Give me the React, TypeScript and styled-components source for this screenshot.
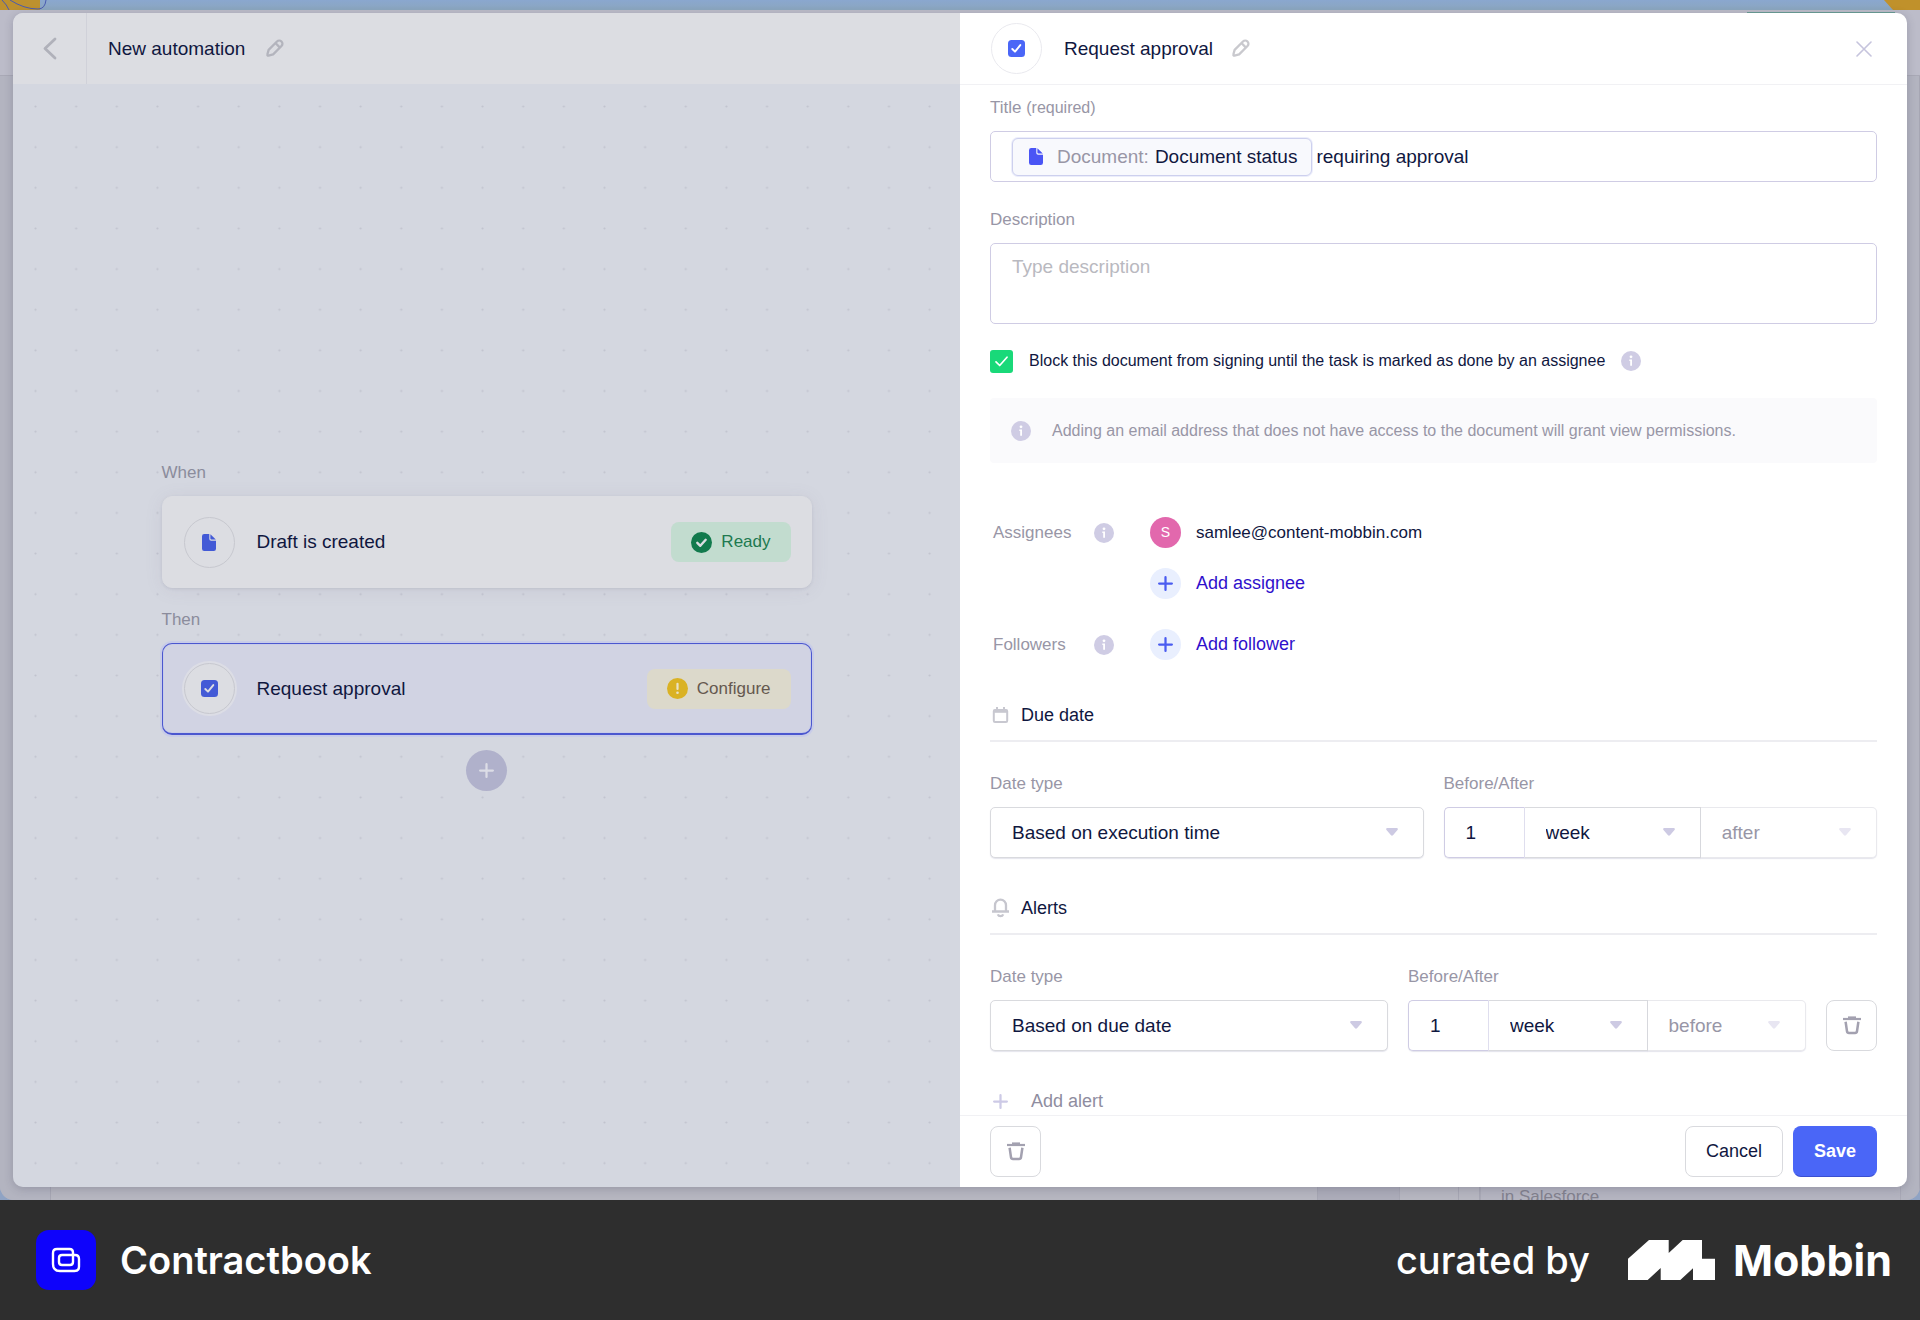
import React, { useId, useState } from "react";
import styled, { createGlobalStyle, css } from "styled-components";

const color = {
  ink: "#10173f",
  label: "#9896a6",
  lavender: "#cfcce4",
  line: "#d9dade",
  primary: "#4a66f7",
  link: "#2f10cc",
};

const GlobalStyle = createGlobalStyle`
  *, *::before, *::after { box-sizing: border-box; }
  body { margin: 0; background: #2e2e2e; }
  body, button, input, select, textarea {
    font-family: "Liberation Sans", Arial, sans-serif;
    color: ${color.ink};
  }
  h1, h2, h3, p { margin: 0; font-weight: 400; }
`;

/* ---------- page frame ---------- */

const Page = styled.div`
  display: flex;
  flex-direction: column;
  height: 100vh;
`;

const Stage = styled.main`
  flex: 1;
  min-height: 0;
  display: grid;
  grid-template: minmax(0, 1fr) / minmax(0, 1fr);
  overflow: hidden;

  > * {
    grid-area: 1 / 1;
  }
`;

const Backdrop = styled.div`
  display: flex;
  flex-direction: column;
  min-height: 0;
  background: #8fa3c4;
  overflow: hidden;
`;

const Wallpaper = styled.div`
  display: flex;
  justify-content: space-between;
  height: 10px;
  background: linear-gradient(#8aa7cf, #8ba6be);
`;

const AppWindow = styled.div`
  flex: 1;
  min-height: 0;
  display: flex;
  flex-direction: column;
  border-radius: 0 0 14px 14px;
  background: #b4b4c0;
  overflow: hidden;
`;

const AppBar = styled.div`
  display: flex;
  justify-content: flex-end;
  height: 66px;
  padding: 2px 25px 0 0;
  background: #bcbcc9;
  border-bottom: 1px solid #a9a9b6;
`;

const AppBarAccent = styled.span`
  width: 148px;
  height: 2px;
  background: #6a9d95;
`;

const AppColumns = styled.div`
  flex: 1;
  min-height: 0;
  display: flex;
  align-items: stretch;
`;

const AppColumn = styled.div<{ $width?: number; $shade?: string }>`
  ${(p) => (p.$width ? `flex: none; width: ${p.$width}px;` : "flex: 1;")}
  background: ${(p) => p.$shade ?? "#b6b6c0"};
  border-right: 1px solid #a6a6b3;
`;

const TemplateCard = styled.div`
  flex: none;
  width: 421px;
  height: calc(100% + 8px);
  display: flex;
  align-items: flex-end;
  padding: 0 20px;
  border: 1px solid #a9a9b6;
  font-size: 17px;
  line-height: 20px;
  color: #83828f;
`;

/* ---------- modal ---------- */

const Modal = styled.section`
  z-index: 1;
  min-height: 0;
  margin: 13px;
  display: grid;
  grid-template: minmax(0, 1fr) / repeat(2, minmax(0, 1fr));
  border-radius: 10px;
  overflow: hidden;
  box-shadow: 0 2px 10px rgba(40, 40, 70, 0.22);
`;

const Overview = styled.div`
  display: flex;
  flex-direction: column;
  background: #d4d7e0;
`;

const OverviewHeader = styled.header`
  flex: none;
  height: 71px;
  display: flex;
  align-items: center;
  background: #dcdde2;
`;

const IconButton = styled.button`
  flex: none;
  display: inline-flex;
  align-items: center;
  justify-content: center;
  padding: 0;
  border: 0;
  background: none;
  cursor: pointer;
`;

const BackButton = styled(IconButton)`
  align-self: stretch;
  width: 74px;
  border-right: 1px solid #d0d1d9;
`;

const Heading = styled.h2`
  font-size: 19px;
  line-height: 24px;
  color: ${color.ink};
`;

const OverviewTitle = styled.div`
  display: flex;
  align-items: center;
  gap: 19px;
  padding-left: 21px;
`;

const Canvas = styled.div`
  flex: 1;
  min-height: 0;
  display: grid;
  grid-template: minmax(0, 1fr) / minmax(0, 1fr);

  > * {
    grid-area: 1 / 1;
  }
`;

const DotGrid = styled.svg`
  width: 100%;
  height: 100%;
`;

const Flow = styled.div`
  z-index: 1;
  display: flex;
  flex-direction: column;
  justify-content: center;
  align-items: center;
  padding: 0 40px 19px;
`;

const Steps = styled.div`
  width: 100%;
  max-width: 650px;
  display: flex;
  flex-direction: column;
`;

const StepLabel = styled.p`
  margin-bottom: 11px;
  font-size: 17px;
  line-height: 24px;
  color: #8b8c9c;
`;

const StepCard = styled.article<{ $active?: boolean }>`
  display: flex;
  align-items: center;
  gap: 22px;
  height: 92px;
  padding: 0 20px 0 21px;
  border-radius: 10px;
  ${(p) =>
    p.$active
      ? css`
          background: #d1d3e3;
          border: 1px solid #4b57cf;
          border-bottom-width: 2px;
          box-shadow: 0 0 0 2px #c8cce8, inset 0 0 0 1px #c8cce8;
        `
      : css`
          background: #dcdde2;
          border: 1px solid #dcdde2;
          margin-bottom: 20px;
          box-shadow: 0 1px 3px rgba(80, 80, 110, 0.12), 0 2px 18px rgba(120, 110, 140, 0.1);
        `}

  ${Heading} {
    flex: 1;
  }
`;

const IconCircle = styled.span<{ $tone?: "muted" | "halo" }>`
  flex: none;
  display: inline-flex;
  align-items: center;
  justify-content: center;
  width: 51px;
  height: 51px;
  border-radius: 50%;
  border: 1px solid ${(p) => (p.$tone ? "#c7c8cf" : "#e9e9ee")};
  background: ${(p) => (p.$tone ? "#dcdde2" : "#ffffff")};
  ${(p) => p.$tone === "halo" && "box-shadow: 0 0 0 2px #dcdde5;"}
`;

const Status = styled.span<{ $kind: "ready" | "configure" }>`
  display: inline-flex;
  align-items: center;
  gap: 9px;
  height: 40px;
  padding: 0 20px;
  border-radius: 8px;
  font-size: 17px;
  background: ${(p) => (p.$kind === "ready" ? "#c2dccf" : "#dcd9cb")};
  color: ${(p) => (p.$kind === "ready" ? "#20794f" : "#65584f")};
`;

const AddStep = styled(IconButton)`
  width: 41px;
  height: 41px;
  margin-top: 15px;
  align-self: center;
  border-radius: 50%;
  background: #b0b1cb;
`;

/* ---------- editor panel ---------- */

const Editor = styled.form`
  display: flex;
  flex-direction: column;
  min-height: 0;
  background: #ffffff;
`;

const EditorHeader = styled.header`
  flex: none;
  display: flex;
  align-items: center;
  gap: 17px;
  height: 72px;
  padding: 0 33px 0 31px;
  border-bottom: 1px solid #f1f1f4;

  ${Heading} {
    margin-left: 5px;
  }
`;

const Close = styled(IconButton)`
  width: 20px;
  height: 20px;
  margin-left: auto;
`;

const EditorBody = styled.div`
  flex: 1;
  min-height: 0;
  overflow-y: auto;
  scrollbar-width: none;
  padding: 11px 30px 0;
`;

const Field = styled.div<{ $after?: number }>`
  flex: 1;
  min-width: 0;
  display: flex;
  flex-direction: column;
  gap: 11px;
  margin-bottom: ${(p) => p.$after ?? 0}px;
`;

const labelText = css`
  font-size: 17px;
  line-height: 24px;
  color: ${color.label};
`;

const Label = styled.label`
  ${labelText}
`;

const Hint = styled.span`
  font-size: 16px;
`;

const TokenBox = styled.div`
  display: flex;
  align-items: center;
  gap: 4px;
  height: 51px;
  padding: 0 21px;
  border: 1px solid ${color.lavender};
  border-radius: 5px;
`;

const Token = styled.span`
  flex: none;
  display: inline-flex;
  align-items: center;
  gap: 6px;
  height: 38px;
  padding: 0 14px 0 16px;
  border: 1px solid #cdd0ee;
  border-radius: 6px;
  background: #f8f9fd;
  box-shadow: 0 0 0 1px #eceefb;
  font-size: 19px;

  svg {
    margin-right: 8px;
  }
`;

const TokenSource = styled.span`
  color: ${color.label};
`;

const BareInput = styled.input`
  flex: 1;
  min-width: 0;
  height: 38px;
  padding: 0;
  border: 0;
  outline: 0;
  background: none;
  font-size: 19px;
`;

const TextArea = styled.textarea`
  display: block;
  width: 100%;
  height: 81px;
  padding: 11px 21px;
  border: 1px solid ${color.lavender};
  border-radius: 5px;
  outline: 0;
  resize: none;
  font-size: 19px;
  line-height: 24px;

  &::placeholder {
    color: #b9b9c0;
  }
`;

const CheckRow = styled.div`
  display: flex;
  align-items: center;
  height: 24px;
  margin-bottom: 25px;
`;

const CheckBox = styled.span`
  display: grid;
  place-items: center;
  width: 23px;
  height: 23px;

  > * {
    grid-area: 1 / 1;
  }

  svg {
    pointer-events: none;
  }
`;

const CheckInput = styled.input`
  appearance: none;
  width: 23px;
  height: 23px;
  margin: 0;
  border-radius: 3px;
  background: #c9c9d6;

  &:checked {
    background: #19d979;
  }
`;

const CheckLabel = styled.label`
  margin: 0 16px;
  font-size: 16px;
  line-height: 24px;
`;

const Notice = styled.p`
  display: flex;
  align-items: center;
  gap: 21px;
  height: 65px;
  padding: 0 21px;
  margin-bottom: 54px;
  border-radius: 4px;
  background: #fafafc;
  font-size: 16px;
  color: ${color.label};
`;

const PeopleGroups = styled.div`
  display: flex;
  flex-direction: column;
  gap: 30px;
  margin-bottom: 43px;
  padding-left: 3px;
`;

const People = styled.div`
  display: grid;
  grid-template-columns: 101px 56px 1fr;
  align-items: start;
`;

const PeopleLabel = styled.span`
  ${labelText}
  line-height: 31px;
`;

const PeopleInfo = styled.span`
  display: flex;
  align-items: center;
  height: 31px;
`;

const PeopleList = styled.div`
  display: flex;
  flex-direction: column;
  align-items: flex-start;
  gap: 20px;
`;

const Person = styled.div`
  display: flex;
  align-items: center;
  gap: 15px;
  font-size: 17px;
`;

const Avatar = styled.span`
  width: 31px;
  height: 31px;
  border-radius: 50%;
  background: #e268ad;
  color: #ffffff;
  font-size: 14px;
  line-height: 31px;
  text-align: center;
`;

const AddPerson = styled.button`
  display: flex;
  align-items: center;
  gap: 15px;
  height: 31px;
  padding: 0;
  border: 0;
  background: none;
  font-size: 18px;
  color: ${color.link};
  cursor: pointer;
`;

const PlusCircle = styled.span`
  display: flex;
  align-items: center;
  justify-content: center;
  width: 31px;
  height: 31px;
  border-radius: 50%;
  background: #e9effe;
`;

const SectionTitle = styled.h3`
  display: flex;
  align-items: center;
  gap: 11px;
  margin-bottom: 30px;
  padding: 0 0 13px 1px;
  border-bottom: 2px solid #ededf1;
  font-size: 18px;
  line-height: 24px;
`;

const FieldRow = styled.div`
  display: flex;
  align-items: flex-end;
  gap: 20px;
  margin-bottom: 38px;
`;

const Joined = styled.div`
  display: flex;

  > * {
    border-radius: 0;
  }
  > :first-child {
    border-radius: 5px 0 0 5px;
  }
  > :last-child select {
    border-radius: 0 5px 5px 0;
  }
  > :not(:last-child) select {
    border-radius: 0;
  }
  > :not(:first-child) select {
    border-left: 0;
  }
`;

const AmountInput = styled.input`
  flex: none;
  width: 81px;
  height: 51px;
  padding: 0 21px;
  border: 1px solid;
  border-color: ${color.lavender} #e2e0f0 ${color.lavender} ${color.lavender};
  box-shadow: 0 1px 1px rgba(190, 190, 210, 0.4);
  outline: 0;
  font-size: 19px;
`;

const SelectBox = styled.div`
  position: relative;
  flex: 1;
  min-width: 0;
`;

const Select = styled.select`
  appearance: none;
  display: block;
  width: 100%;
  height: 51px;
  padding: 0 48px 0 21px;
  border: 1px solid ${color.line};
  border-radius: 5px;
  box-shadow: 0 1px 1px rgba(190, 190, 210, 0.4);
  background: #ffffff;
  outline: 0;
  font-size: 19px;

  &:disabled {
    color: ${color.label};
    border-color: #e9e9ed;
    opacity: 1;
  }
`;

const SelectArrow = styled.svg`
  position: absolute;
  top: 21px;
  right: 26px;
  pointer-events: none;
`;

const AddAlert = styled.button`
  display: flex;
  align-items: center;
  gap: 23px;
  height: 24px;
  padding: 0 0 0 3px;
  border: 0;
  background: none;
  font-size: 18px;
  line-height: 24px;
  color: #8f8d9f;
  cursor: pointer;
`;

const EditorFooter = styled.footer`
  flex: none;
  display: flex;
  gap: 10px;
  padding: 10px 30px;
  border-top: 1px solid #f1f1f4;
`;

const Button = styled.button<{ $kind?: "primary" | "icon" }>`
  flex: none;
  display: inline-flex;
  align-items: center;
  justify-content: center;
  height: 51px;
  padding: 0 20px;
  border: 1px solid ${color.line};
  border-radius: 8px;
  background: #ffffff;
  font-size: 18px;
  cursor: pointer;

  ${(p) => p.$kind === "icon" && "width: 51px; padding: 0;"}
  ${(p) =>
    p.$kind === "primary" &&
    css`
      border-color: ${color.primary} ${color.primary} #3a4fd0;
      background: ${color.primary};
      color: #ffffff;
      font-weight: 700;
    `}
`;

const FooterSpacer = styled.span`
  flex: 1;
`;

/* ---------- credit bar ---------- */

const CreditBar = styled.footer`
  flex: none;
  display: flex;
  align-items: center;
  height: 120px;
  padding: 0 28px 0 36px;
  background: #2e2e2e;
  color: #ffffff;
  font-family: Inter, "Liberation Sans", sans-serif;
  font-size: 38px;
  font-weight: 500;
`;

const Brand = styled.span`
  display: flex;
  align-items: center;
  gap: 24px;
  margin-right: auto;
  font-weight: 600;
`;

const Curator = styled.span`
  display: flex;
  align-items: center;
  gap: 18px;
  margin-left: 38px;
  font-size: 43px;
  font-weight: 700;
`;

/* ---------- icons ---------- */

const Pencil = ({ stroke = "#c9c9ce" }: { stroke?: string }) => (
  <svg width="20" height="20" viewBox="0 0 20 20" fill="none" stroke={stroke} strokeWidth="2.300" strokeLinejoin="round" aria-hidden>
    <g transform="rotate(45 10 10)">
      <path d="M6.8 2.600a3.200 3.200 0 0 1 6.400 0v11.800L10.800 18.600a.9.9 0 0 1-1.600 0L6.800 14.400z" />
      <path d="M6.800 4.800h6.400" />
    </g>
  </svg>
);

const FileIcon = ({ fill }: { fill: string }) => (
  <svg width="14" height="17" viewBox="0 0 14 17" fill={fill} aria-hidden>
    <path d="M2.200 0H7.300V4.900A1.800 1.800 0 0 0 9.100 6.700H14V14.800A2.200 2.200 0 0 1 11.800 17H2.200A2.200 2.200 0 0 1 0 14.800V2.200A2.200 2.200 0 0 1 2.200 0Z" />
    <path d="M8.400 0.200L13.800 5.600H9.500A1.100 1.100 0 0 1 8.400 4.500Z" />
  </svg>
);

const TaskIcon = ({ fill, check }: { fill: string; check: string }) => (
  <svg width="17" height="17" viewBox="0 0 17 17" aria-hidden>
    <rect width="17" height="17" rx="3.500" fill={fill} />
    <path d="M4.300 9l2.700 2.700 5.300-6.600" fill="none" stroke={check} strokeWidth="1.900" strokeLinecap="round" strokeLinejoin="round" />
  </svg>
);

const InfoIcon = () => (
  <svg width="20" height="20" viewBox="0 0 20 20" role="img" aria-label="Info">
    <circle cx="10" cy="10" r="10" fill={color.lavender} />
    <circle cx="10" cy="5.800" r="1.400" fill="#fff" />
    <path d="M8.300 8.600H11v6.200H9.200v-4.800h-.9z" fill="#fff" />
  </svg>
);

const Plus = ({ size, stroke }: { size: number; stroke: string }) => (
  <svg width={size} height={size} viewBox="0 0 16 16" stroke={stroke} strokeWidth="2.400" strokeLinecap="round" aria-hidden>
    <path d="M8 1.200v13.600M1.200 8h13.600" />
  </svg>
);

const Trash = () => (
  <svg width="18" height="19" viewBox="0 0 18 19" fill="none" stroke="#a3a1b0" aria-hidden>
    <path d="M0 3H18" strokeWidth="2.200" />
    <path d="M5 1.200H13" strokeWidth="1.600" />
    <path d="M2.600 5.800L4 15.300A2 2 0 0 0 6 17H12A2 2 0 0 0 14 15.300L15.400 5.800" strokeWidth="2.500" />
  </svg>
);

const CalendarIcon = () => (
  <svg width="19" height="20" viewBox="0 0 19 20" fill="none" stroke="#c8c8d0" aria-hidden>
    <rect x="2.800" y="5" width="13.400" height="12" rx="1.200" strokeWidth="2" />
    <path d="M2.800 6.300H16.200" strokeWidth="3" />
    <path d="M6 2V5M13 2V5" strokeWidth="2" />
  </svg>
);

const BellIcon = () => (
  <svg width="19" height="20" viewBox="0 0 19 20" fill="none" stroke="#c6c6ce" strokeWidth="2.300" aria-hidden>
    <path d="M1 13.500H18M4 13.500V7.200A5.500 5.500 0 0 1 15 7.200V13.500" />
    <path d="M6.800 16.300A2.900 2.900 0 0 0 12.200 16.300" />
  </svg>
);

const ContractbookLogo = () => (
  <svg width="60" height="60" viewBox="0 0 60 60" aria-hidden>
    <rect width="60" height="60" rx="13" fill="#0e03fb" />
    <path
      d="M21 19H33.500Q37 19 37 22.500V32Q37 35 34 35H26Q23 35 23 32V28Q23 25 26 25H39Q43 25 43 29V36.500Q43 41 38.500 41H24Q17 41 17 34V23Q17 19 21 19Z"
      fill="none"
      stroke="#fff"
      strokeWidth="2.400"
    />
  </svg>
);

const MobbinLogo = () => (
  <svg width="87" height="40" viewBox="0 0 87 40" fill="#fff" aria-hidden>
    <path d="M0 18.700L21 0H40.700V13L54.700 0H74V18.700H87V40H65V28.300L52.300 40H32.700V28L19.700 40H0Z" />
  </svg>
);

/* ---------- composed parts ---------- */

type DropdownProps = { id?: string; label?: string; options: string[]; disabled?: boolean };

const Dropdown = ({ id, label, options, disabled }: DropdownProps) => (
  <SelectBox>
    <Select id={id} aria-label={label} disabled={disabled} defaultValue={options[0]}>
      {options.map((o) => (
        <option key={o}>{o}</option>
      ))}
    </Select>
    <SelectArrow width="12" height="8" viewBox="0 0 12 8" fill={disabled ? "#e8e6f2" : "#cdcae3"} aria-hidden>
      <path d="M1 0H11Q12.500 0.500 11.500 2L7.200 7Q6 8.500 4.800 7L.5 2Q-.5.500 1 0Z" />
    </SelectArrow>
  </SelectBox>
);

const DateFields = ({ basis, relation, children }: { basis: string[]; relation: string[]; children?: React.ReactNode }) => {
  const id = useId();
  const [amount, setAmount] = useState("1");
  return (
    <FieldRow>
      <Field>
        <Label htmlFor={`${id}-type`}>Date type</Label>
        <Dropdown id={`${id}-type`} options={basis} />
      </Field>
      <Field>
        <Label htmlFor={`${id}-amount`}>Before/After</Label>
        <Joined>
          <AmountInput id={`${id}-amount`} inputMode="numeric" value={amount} onChange={(e) => setAmount(e.target.value)} />
          <Dropdown label="Unit" options={["week", "day", "month"]} />
          <Dropdown label="Relation" options={relation} disabled />
        </Joined>
      </Field>
      {children}
    </FieldRow>
  );
};

const AddPersonButton = ({ children }: { children: React.ReactNode }) => (
  <AddPerson type="button">
    <PlusCircle>
      <Plus size={15} stroke="#4a5cf0" />
    </PlusCircle>
    {children}
  </AddPerson>
);

const AppBackdrop = () => (
  <Backdrop aria-hidden>
    <Wallpaper>
      <svg width="48" height="10" viewBox="0 0 48 10">
        <path d="M0 0H40V10H0Z" fill="#bd912f" />
        <path d="M2 0Q7 5 9 10M10 0Q24 9 38 9Q45 9 46 0" fill="none" stroke="#4a5bb0" />
      </svg>
      <svg width="36" height="10" viewBox="0 0 36 10">
        <path d="M0 0H36V10H9Z" fill="#c0912b" />
      </svg>
    </Wallpaper>
    <AppWindow>
      <AppBar>
        <AppBarAccent />
      </AppBar>
      <AppColumns>
        <AppColumn $width={51} $shade="#b3b4c0" />
        <AppColumn />
        <AppColumn $width={82} $shade="#acacb9" />
        <AppColumn $width={59} />
        <AppColumn $width={21} />
        <TemplateCard>in Salesforce</TemplateCard>
        <AppColumn $width={19} $shade="#b3b4c0" />
      </AppColumns>
    </AppWindow>
  </Backdrop>
);

const AutomationOverview = () => (
  <Overview>
    <OverviewHeader>
      <BackButton type="button" aria-label="Back">
        <svg width="14" height="23" viewBox="0 0 14 23" fill="none" stroke="#b0b1ba" strokeWidth="2.800" strokeLinecap="round" strokeLinejoin="round">
          <path d="M12 2L2 11.500L12 21" />
        </svg>
      </BackButton>
      <OverviewTitle>
        <Heading>New automation</Heading>
        <IconButton type="button" aria-label="Rename automation">
          <Pencil stroke="#b3b4bd" />
        </IconButton>
      </OverviewTitle>
    </OverviewHeader>
    <Canvas>
      <DotGrid aria-hidden>
        <defs>
          <pattern id="dots" x="2.200" y="2.200" width="40.640" height="40.640" patternUnits="userSpaceOnUse">
            <circle cx="20.320" cy="20.320" r="1.100" fill="#c1c3ce" />
          </pattern>
        </defs>
        <rect width="100%" height="100%" fill="url(#dots)" />
      </DotGrid>
      <Flow>
        <Steps>
          <StepLabel>When</StepLabel>
          <StepCard>
            <IconCircle $tone="muted">
              <FileIcon fill="#435ad6" />
            </IconCircle>
            <Heading as="h3">Draft is created</Heading>
            <Status $kind="ready">
              <svg width="21" height="21" viewBox="0 0 21 21" aria-hidden>
                <circle cx="10.500" cy="10.500" r="10.500" fill="#127a4d" />
                <path d="M6.300 10.800l3 3 5.400-6" fill="none" stroke="#dcdde2" strokeWidth="2.400" strokeLinecap="round" strokeLinejoin="round" />
              </svg>
              Ready
            </Status>
          </StepCard>
          <StepLabel>Then</StepLabel>
          <StepCard $active>
            <IconCircle $tone="halo">
              <TaskIcon fill="#435ad6" check="#dcdde2" />
            </IconCircle>
            <Heading as="h3">Request approval</Heading>
            <Status $kind="configure">
              <svg width="21" height="21" viewBox="0 0 21 21" aria-hidden>
                <circle cx="10.500" cy="10.500" r="10.500" fill="#dab224" />
                <path d="M10.500 5.800v5.200" stroke="#e9e2c8" strokeWidth="2.200" strokeLinecap="round" />
                <circle cx="10.500" cy="14.800" r="1.300" fill="#e9e2c8" />
              </svg>
              Configure
            </Status>
          </StepCard>
          <AddStep type="button" aria-label="Add step">
            <Plus size={15} stroke="#dcdde6" />
          </AddStep>
        </Steps>
      </Flow>
    </Canvas>
  </Overview>
);

const ActionEditor = () => {
  const [title, setTitle] = useState("requiring approval");
  const [blocking, setBlocking] = useState(true);
  return (
    <Editor onSubmit={(e) => e.preventDefault()}>
      <EditorHeader>
        <IconCircle>
          <TaskIcon fill={color.primary} check="#fff" />
        </IconCircle>
        <Heading>Request approval</Heading>
        <IconButton type="button" aria-label="Rename action">
          <Pencil />
        </IconButton>
        <Close type="button" aria-label="Close">
          <svg width="16" height="16" viewBox="0 0 16 16" stroke="#c6c4dd" strokeWidth="1.600" strokeLinecap="round">
            <path d="M1 1L15 15M15 1L1 15" />
          </svg>
        </Close>
      </EditorHeader>

      <EditorBody>
        <Field $after={26}>
          <Label htmlFor="title">
            Title <Hint>(required)</Hint>
          </Label>
          <TokenBox>
            <Token>
              <FileIcon fill="#4a55f5" />
              <TokenSource>Document:</TokenSource>
              Document status
            </Token>
            <BareInput id="title" value={title} onChange={(e) => setTitle(e.target.value)} />
          </TokenBox>
        </Field>

        <Field $after={25}>
          <Label htmlFor="description">Description</Label>
          <TextArea id="description" placeholder="Type description" />
        </Field>

        <CheckRow>
          <CheckBox>
            <CheckInput type="checkbox" id="blocking" checked={blocking} onChange={(e) => setBlocking(e.target.checked)} />
            <svg width="13" height="11" viewBox="0 0 13 11" fill="none" stroke="#fff" strokeWidth="1.700" strokeLinecap="round" strokeLinejoin="round" aria-hidden>
              <path d="M1 5.800L4.700 9.500L12 1.200" />
            </svg>
          </CheckBox>
          <CheckLabel htmlFor="blocking">
            Block this document from signing until the task is marked as done by an assignee
          </CheckLabel>
          <InfoIcon />
        </CheckRow>

        <Notice>
          <InfoIcon />
          Adding an email address that does not have access to the document will grant view permissions.
        </Notice>

        <PeopleGroups>
          <People>
            <PeopleLabel>Assignees</PeopleLabel>
            <PeopleInfo>
              <InfoIcon />
            </PeopleInfo>
            <PeopleList>
              <Person>
                <Avatar>S</Avatar>
                samlee@content-mobbin.com
              </Person>
              <AddPersonButton>Add assignee</AddPersonButton>
            </PeopleList>
          </People>
          <People>
            <PeopleLabel>Followers</PeopleLabel>
            <PeopleInfo>
              <InfoIcon />
            </PeopleInfo>
            <PeopleList>
              <AddPersonButton>Add follower</AddPersonButton>
            </PeopleList>
          </People>
        </PeopleGroups>

        <SectionTitle>
          <CalendarIcon />
          Due date
        </SectionTitle>
        <DateFields basis={["Based on execution time", "Fixed date"]} relation={["after", "before"]} />

        <SectionTitle>
          <BellIcon />
          Alerts
        </SectionTitle>
        <DateFields basis={["Based on due date", "Fixed date"]} relation={["before", "after"]}>
          <Button type="button" $kind="icon" aria-label="Delete alert">
            <Trash />
          </Button>
        </DateFields>
        <AddAlert type="button">
          <Plus size={15} stroke="#cdcae6" />
          Add alert
        </AddAlert>
      </EditorBody>

      <EditorFooter>
        <Button type="button" $kind="icon" aria-label="Delete action">
          <Trash />
        </Button>
        <FooterSpacer />
        <Button type="button">Cancel</Button>
        <Button type="submit" $kind="primary">
          Save
        </Button>
      </EditorFooter>
    </Editor>
  );
};

export default function App() {
  return (
    <Page>
      <GlobalStyle />
      <Stage>
        <AppBackdrop />
        <Modal>
          <AutomationOverview />
          <ActionEditor />
        </Modal>
      </Stage>
      <CreditBar>
        <Brand>
          <ContractbookLogo />
          Contractbook
        </Brand>
        curated by
        <Curator>
          <MobbinLogo />
          Mobbin
        </Curator>
      </CreditBar>
    </Page>
  );
}
